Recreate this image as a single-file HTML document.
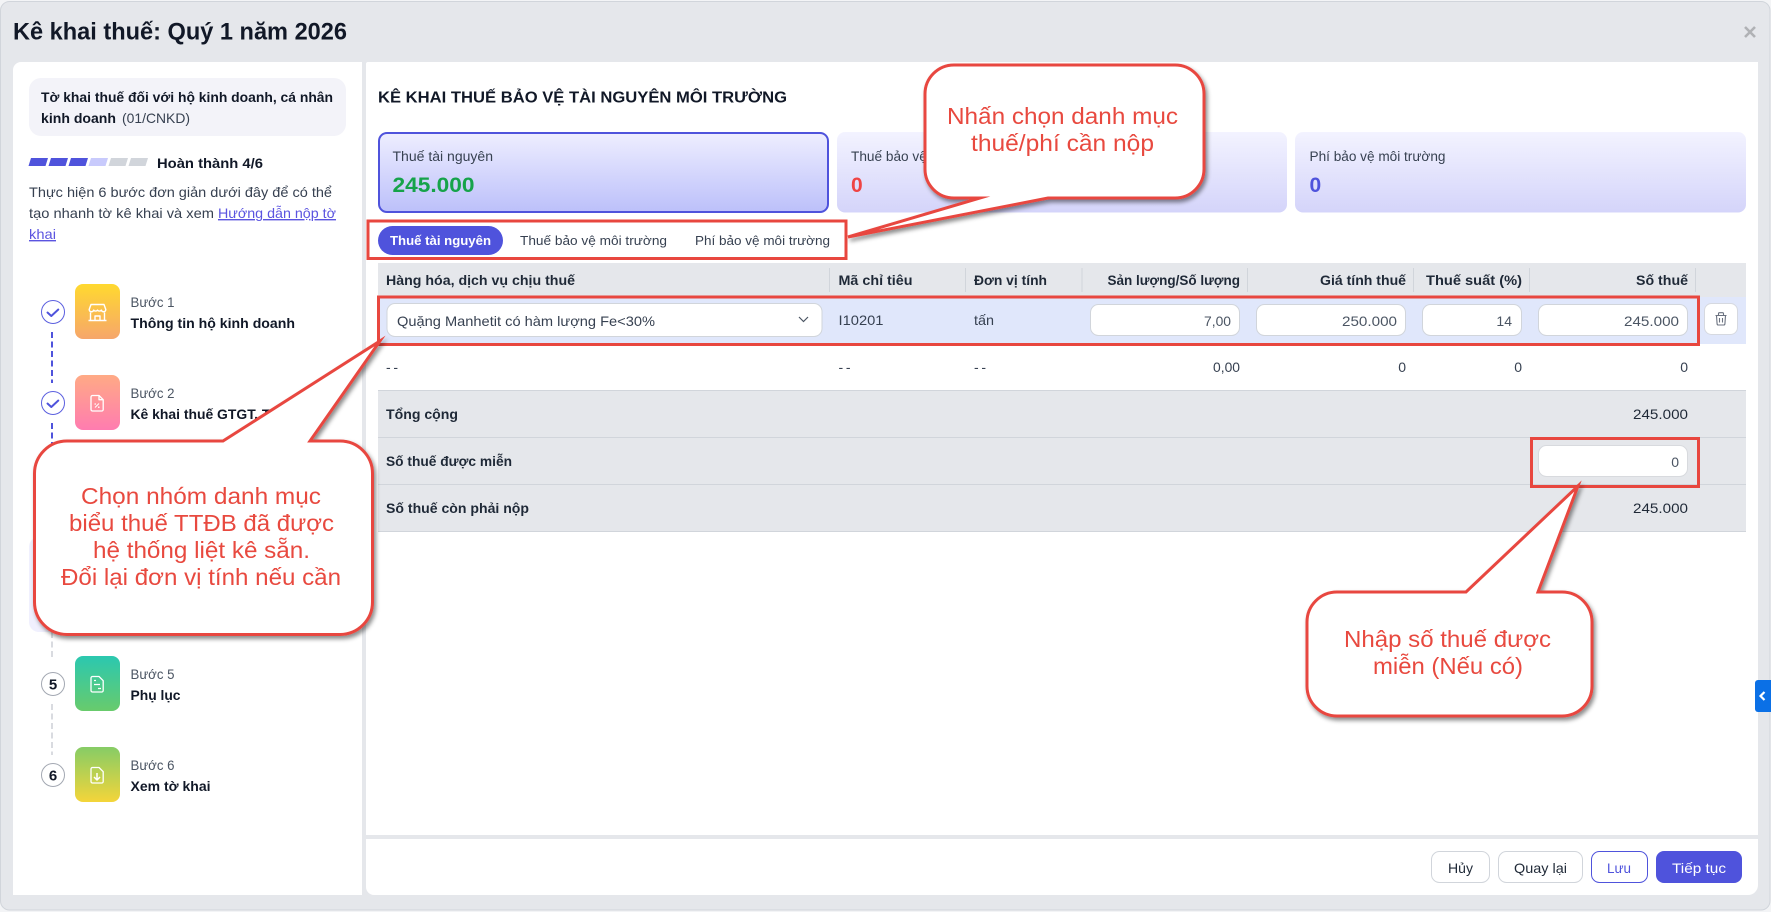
<!DOCTYPE html>
<html lang="vi">
<head>
<meta charset="utf-8">
<title>Kê khai thuế</title>
<style>
html,body{margin:0;padding:0;background:#f3f4f6;width:1771px;height:912px;overflow:hidden}
svg{display:block;position:absolute;left:0;top:0}
text{font-family:"Liberation Sans",Arial,sans-serif;fill:#1f2937;font-size:14px}
.b{font-weight:700;fill:#111827}
.h{font-weight:700;font-size:13.5px;fill:#1f2937}
.g{fill:#4b5563}
.n{fill:#374151}
.i{fill:#4b5563}
.c{font-size:23.5px;fill:#e8493f}
</style>
</head>
<body>
<svg width="1771" height="912" viewBox="0 0 1771 912" xmlns="http://www.w3.org/2000/svg">
<defs>
<linearGradient id="act" x1="0" y1="0" x2="0" y2="1"><stop offset="0" stop-color="#eeeeff"/><stop offset="1" stop-color="#bcc0fa"/></linearGradient>
<linearGradient id="ina" x1="0" y1="0" x2="0" y2="1"><stop offset="0" stop-color="#f3f3ff"/><stop offset="1" stop-color="#d4d4fa"/></linearGradient>
<linearGradient id="s1" x1="0" y1="0" x2="0" y2="1"><stop offset="0" stop-color="#ffd92f"/><stop offset="1" stop-color="#f6a66b"/></linearGradient>
<linearGradient id="s2" x1="0" y1="0" x2="0" y2="1"><stop offset="0" stop-color="#ffaa85"/><stop offset="1" stop-color="#ff7cb0"/></linearGradient>
<linearGradient id="s5" x1="0" y1="0" x2="0" y2="1"><stop offset="0" stop-color="#2bc8b0"/><stop offset="1" stop-color="#68cb6c"/></linearGradient>
<linearGradient id="s6" x1="0" y1="0" x2="0" y2="1"><stop offset="0" stop-color="#86cc66"/><stop offset="1" stop-color="#f4d53a"/></linearGradient>
<filter id="sh" x="-10%" y="-10%" width="125%" height="125%"><feDropShadow dx="2" dy="3" stdDeviation="2.2" flood-color="#000" flood-opacity=".45"/></filter>
</defs>

<!-- modal -->
<rect x=".5" y="1.5" width="1769.5" height="908.5" rx="9" fill="#e5e7eb" stroke="#d1d5db"/>
<text x="13" y="39.5" class="b" style="font-size:24.5px" textLength="334" lengthAdjust="spacingAndGlyphs">Kê khai thuế: Quý 1 năm 2026</text>
<path d="M1745 27l10 10M1755 27l-10 10" stroke="#b0b2b5" stroke-width="2.6" fill="none"/>

<!-- left panel -->
<path d="M13 70a8 8 0 0 1 8-8H362V895H13Z" fill="#fff"/>
<rect x="29" y="78" width="317" height="58" rx="12" fill="#f3f3f9"/>
<text x="41" y="102" class="b" textLength="292" lengthAdjust="spacingAndGlyphs">Tờ khai thuế đối với hộ kinh doanh, cá nhân</text>
<text x="41" y="123" class="b" textLength="75" lengthAdjust="spacingAndGlyphs">kinh doanh</text>
<text x="122" y="123" class="n" textLength="68" lengthAdjust="spacingAndGlyphs">(01/CNKD)</text>

<g>
<path d="M31 158h17l-2.500 8h-17Z" fill="#4f53dc"/>
<path d="M51 158h17l-2.500 8h-17Z" fill="#4f53dc"/>
<path d="M71 158h17l-2.500 8h-17Z" fill="#4f53dc"/>
<path d="M91 158h17l-2.500 8h-17Z" fill="#c8cafc"/>
<path d="M111 158h17l-2.500 8h-17Z" fill="#d1d5db"/>
<path d="M131 158h17l-2.500 8h-17Z" fill="#d1d5db"/>
</g>
<text x="157" y="168" class="b" textLength="106" lengthAdjust="spacingAndGlyphs">Hoàn thành 4/6</text>
<text x="29" y="197" class="n" textLength="303" lengthAdjust="spacingAndGlyphs">Thực hiện 6 bước đơn giản dưới đây để có thể</text>
<text x="29" y="218" class="n" textLength="185" lengthAdjust="spacingAndGlyphs">tạo nhanh tờ kê khai và xem</text>
<text x="218" y="218" style="fill:#5b54e0;text-decoration:underline" textLength="118" lengthAdjust="spacingAndGlyphs">Hướng dẫn nộp tờ</text>
<text x="29" y="239" style="fill:#5b54e0;text-decoration:underline" textLength="27" lengthAdjust="spacingAndGlyphs">khai</text>

<!-- active highlight step 4 -->
<rect x="29" y="537" width="317" height="95" rx="10" fill="#f0f0fe"/>

<!-- connectors -->
<path d="M52 332V383" stroke="#4f53dc" stroke-width="2" stroke-dasharray="6 3.500" fill="none"/>
<path d="M52 423V474" stroke="#4f53dc" stroke-width="2" stroke-dasharray="6 3.500" fill="none"/>
<path d="M52 632V660" stroke="#d9dbe0" stroke-width="2" stroke-dasharray="6 3.500" fill="none"/>
<path d="M52 704V755" stroke="#d9dbe0" stroke-width="2" stroke-dasharray="6 3.500" fill="none"/>

<!-- step 1 -->
<circle cx="53" cy="312" r="11.500" fill="#fff" stroke="#5b5fdf" stroke-width="1"/>
<path d="M47.500 312.500l3.800 3.500 7-6.500" fill="none" stroke="#4f53dc" stroke-width="2" stroke-linecap="round" stroke-linejoin="round"/>
<rect x="75" y="284" width="45" height="55" rx="8" fill="url(#s1)"/>
<g fill="none" stroke="#fff" stroke-width="1.400" stroke-linejoin="round">
<path d="M91 304.500h13l1.800 5a2.300 2.300 0 0 1-4.500.6 2.300 2.300 0 0 1-3.800 0 2.300 2.300 0 0 1-3.800 0 2.300 2.300 0 0 1-4.500-.6Z"/>
<path d="M90.500 312.500V320.500M104.500 312.500V320.500M88.500 320.500H106.500"/>
<path d="M95 320.500V316h5v4.500"/>
</g>
<text x="130.500" y="307" class="g" textLength="44" lengthAdjust="spacingAndGlyphs">Bước 1</text>
<text x="130.500" y="328" class="b" textLength="164.500" lengthAdjust="spacingAndGlyphs">Thông tin hộ kinh doanh</text>

<!-- step 2 -->
<circle cx="53" cy="403" r="11.500" fill="#fff" stroke="#5b5fdf" stroke-width="1"/>
<path d="M47.500 403.500l3.800 3.500 7-6.500" fill="none" stroke="#4f53dc" stroke-width="2" stroke-linecap="round" stroke-linejoin="round"/>
<rect x="75" y="375" width="45" height="55" rx="8" fill="url(#s2)"/>
<g fill="none" stroke="#fff" stroke-width="1.300" stroke-linejoin="round">
<path d="M92.500 395.500h6.500l4.200 4.200v9.800a1.500 1.500 0 0 1-1.500 1.500h-9.200a1.500 1.500 0 0 1-1.500-1.500v-12.500a1.500 1.500 0 0 1 1.500-1.500Z"/>
<path d="M99 395.500v4.200h4.200"/>
<path d="M95 407.500l4-4" stroke-width="1"/>
</g>
<circle cx="95.200" cy="404" r=".8" fill="#fff"/><circle cx="98.800" cy="407.200" r=".8" fill="#fff"/>
<text x="130.500" y="398" class="g" textLength="44" lengthAdjust="spacingAndGlyphs">Bước 2</text>
<text x="130.500" y="419" class="b" textLength="170" lengthAdjust="spacingAndGlyphs">Kê khai thuế GTGT, TNCN</text>

<!-- step 5 -->
<circle cx="53" cy="684" r="11.500" fill="#fff" stroke="#a3a8b2" stroke-width="1"/>
<text x="53" y="689.500" class="b" text-anchor="middle" style="font-size:15px">5</text>
<rect x="75" y="656" width="45" height="55" rx="8" fill="url(#s5)"/>
<g fill="none" stroke="#fff" stroke-width="1.300" stroke-linejoin="round">
<path d="M92.500 676.500h6.500l4.200 4.200v9.800a1.500 1.500 0 0 1-1.500 1.500h-9.200a1.500 1.500 0 0 1-1.500-1.500v-12.500a1.500 1.500 0 0 1 1.500-1.500Z"/>
<path d="M94 680.500h2M94 684.500h6M98 688.500h3"/>
</g>
<text x="130.500" y="679" class="g" textLength="44" lengthAdjust="spacingAndGlyphs">Bước 5</text>
<text x="130.500" y="700" class="b" textLength="50" lengthAdjust="spacingAndGlyphs">Phụ lục</text>

<!-- step 6 -->
<circle cx="53" cy="775" r="11.500" fill="#fff" stroke="#a3a8b2" stroke-width="1"/>
<text x="53" y="780.500" class="b" text-anchor="middle" style="font-size:15px">6</text>
<rect x="75" y="747" width="45" height="55" rx="8" fill="url(#s6)"/>
<g fill="none" stroke="#fff" stroke-width="1.300" stroke-linejoin="round">
<path d="M92.500 767.500h6.500l4.200 4.200v9.800a1.500 1.500 0 0 1-1.500 1.500h-9.200a1.500 1.500 0 0 1-1.500-1.500v-12.500a1.500 1.500 0 0 1 1.500-1.500Z"/>
<path d="M97 773v6.500M94 777l3 3 3-3" stroke-width="1.500"/>
</g>
<text x="130.500" y="770" class="g" textLength="44" lengthAdjust="spacingAndGlyphs">Bước 6</text>
<text x="130.500" y="791" class="b" textLength="80" lengthAdjust="spacingAndGlyphs">Xem tờ khai</text>

<!-- right panel -->
<path d="M366 64a2 2 0 0 1 2-2H1758V885a10 10 0 0 1-10 10H374a8 8 0 0 1-8-8Z" fill="#fff"/>
<rect x="366" y="835" width="1392" height="4" fill="#e5e7eb"/>

<text x="378" y="102.500" class="b" style="font-size:16px" textLength="409" lengthAdjust="spacingAndGlyphs">KÊ KHAI THUẾ BẢO VỆ TÀI NGUYÊN MÔI TRƯỜNG</text>

<!-- cards -->
<rect x="379" y="133" width="449" height="79" rx="8" fill="url(#act)" stroke="#4f53dc" stroke-width="2"/>
<text x="392.500" y="161" class="n" style="font-size:13.5px" textLength="100.500" lengthAdjust="spacingAndGlyphs">Thuế tài nguyên</text>
<text x="392.500" y="192" class="b" style="font-size:21px;fill:#16a34a" textLength="82" lengthAdjust="spacingAndGlyphs">245.000</text>

<rect x="837" y="132" width="450" height="80.500" rx="8" fill="url(#ina)"/>
<text x="851" y="161" class="n" style="font-size:13.500px" textLength="147" lengthAdjust="spacingAndGlyphs">Thuế bảo vệ môi trường</text>
<text x="851" y="192" class="b" style="font-size:21px;fill:#ef4444">0</text>

<rect x="1295" y="132" width="451" height="80.500" rx="8" fill="url(#ina)"/>
<text x="1309.500" y="161" class="n" style="font-size:13.500px" textLength="136" lengthAdjust="spacingAndGlyphs">Phí bảo vệ môi trường</text>
<text x="1309.500" y="192" class="b" style="font-size:21px;fill:#4f53dc">0</text>

<!-- tabs -->
<rect x="378" y="226" width="125" height="29" rx="14.500" fill="#4f53dc"/>
<text x="390" y="245" class="b" style="font-size:13px;fill:#fff" textLength="101" lengthAdjust="spacingAndGlyphs">Thuế tài nguyên</text>
<text x="520" y="245" class="n" style="font-size:13px" textLength="147" lengthAdjust="spacingAndGlyphs">Thuế bảo vệ môi trường</text>
<text x="695" y="245" class="n" style="font-size:13px" textLength="135" lengthAdjust="spacingAndGlyphs">Phí bảo vệ môi trường</text>

<!-- table header -->
<rect x="378" y="263" width="1368" height="34" fill="#e5e7eb"/>
<path d="M829.500 268v24M965.500 268v24M1082 268v24M1247.500 268v24M1413.500 268v24M1529.500 268v24M1695.500 268v24" stroke="#d1d5db" stroke-width="1"/>
<text x="386" y="285" class="h" textLength="189" lengthAdjust="spacingAndGlyphs">Hàng hóa, dịch vụ chịu thuế</text>
<text x="838.500" y="285" class="h" textLength="74" lengthAdjust="spacingAndGlyphs">Mã chỉ tiêu</text>
<text x="974" y="285" class="h" textLength="73" lengthAdjust="spacingAndGlyphs">Đơn vị tính</text>
<text x="1107.500" y="285" class="h" textLength="132.500" lengthAdjust="spacingAndGlyphs">Sản lượng/Số lượng</text>
<text x="1320" y="285" class="h" textLength="86" lengthAdjust="spacingAndGlyphs">Giá tính thuế</text>
<text x="1426" y="285" class="h" textLength="96" lengthAdjust="spacingAndGlyphs">Thuế suất (%)</text>
<text x="1636" y="285" class="h" textLength="52" lengthAdjust="spacingAndGlyphs">Số thuế</text>

<!-- row 1 -->
<rect x="378" y="297" width="1368" height="47" fill="#e0e7fb"/>
<rect x="387" y="303.500" width="435" height="33" rx="8" fill="#fff" stroke="#d1d5db"/>
<text x="397" y="326" class="n" textLength="258" lengthAdjust="spacingAndGlyphs">Quặng Manhetit có hàm lượng Fe&lt;30%</text>
<path d="M799 317l4.500 4.500 4.500-4.500" fill="none" stroke="#4b5563" stroke-width="1.200"/>
<text x="838.500" y="325" class="n" textLength="45" lengthAdjust="spacingAndGlyphs">I10201</text>
<text x="974" y="325" class="n" textLength="20" lengthAdjust="spacingAndGlyphs">tấn</text>

<rect x="1090.500" y="304.500" width="149" height="31" rx="8" fill="#fff" stroke="#d1d5db"/>
<text x="1204" y="326" class="i" textLength="27" lengthAdjust="spacingAndGlyphs">7,00</text>
<rect x="1256.500" y="304.500" width="149" height="31" rx="8" fill="#fff" stroke="#d1d5db"/>
<text x="1342" y="326" class="i" textLength="55" lengthAdjust="spacingAndGlyphs">250.000</text>
<rect x="1422.500" y="304.500" width="99" height="31" rx="8" fill="#fff" stroke="#d1d5db"/>
<text x="1512" y="326" class="i" text-anchor="end">14</text>
<rect x="1538.500" y="304.500" width="149" height="31" rx="8" fill="#fff" stroke="#d1d5db"/>
<text x="1624" y="326" class="i" textLength="55" lengthAdjust="spacingAndGlyphs">245.000</text>

<rect x="1704.500" y="303.500" width="33" height="31" rx="7" fill="#fff" stroke="#d6d9e0"/>
<g fill="none" stroke="#6b7280" stroke-width="1.100">
<path d="M1715.500 315.500h11M1718.500 315.500v-1.800a1 1 0 0 1 1-1h3a1 1 0 0 1 1 1v1.800"/>
<path d="M1716.500 315.500l.6 8.500a1.200 1.200 0 0 0 1.200 1h5.400a1.200 1.200 0 0 0 1.200-1l.6-8.500M1719.500 318v4.500M1722.500 318v4.500"/>
</g>

<!-- row 2 -->
<rect x="378" y="344" width="1368" height="46" fill="#fff"/>
<text x="386" y="372" class="n" textLength="12" lengthAdjust="spacing">--</text>
<text x="838.500" y="372" class="n" textLength="12" lengthAdjust="spacing">--</text>
<text x="974" y="372" class="n" textLength="12" lengthAdjust="spacing">--</text>
<text x="1240" y="372" class="n" text-anchor="end" textLength="27" lengthAdjust="spacingAndGlyphs">0,00</text>
<text x="1406" y="372" class="n" text-anchor="end">0</text>
<text x="1522" y="372" class="n" text-anchor="end">0</text>
<text x="1688" y="372" class="n" text-anchor="end">0</text>

<!-- summary -->
<rect x="378" y="390" width="1368" height="141" fill="#e5e7eb"/>
<path d="M378 390.500H1746M378 437.500H1746M378 484.500H1746M378 531.500H1746" stroke="#d1d5db" stroke-width="1"/>
<text x="386" y="419" class="h" textLength="72" lengthAdjust="spacingAndGlyphs">Tổng cộng</text>
<text x="386" y="466" class="h" textLength="126" lengthAdjust="spacingAndGlyphs">Số thuế được miễn</text>
<text x="386" y="513" class="h" textLength="143" lengthAdjust="spacingAndGlyphs">Số thuế còn phải nộp</text>
<text x="1633" y="419" class="n" style="fill:#1f2937" textLength="55" lengthAdjust="spacingAndGlyphs">245.000</text>
<rect x="1538.500" y="445.500" width="149" height="31" rx="8" fill="#fff" stroke="#d8dade"/>
<text x="1679" y="467" class="i" text-anchor="end">0</text>
<text x="1633" y="513" class="n" style="fill:#1f2937" textLength="55" lengthAdjust="spacingAndGlyphs">245.000</text>

<!-- footer -->
<rect x="1431.500" y="851.500" width="58" height="31" rx="8" fill="#fff" stroke="#d1d5db"/>
<text x="1448" y="873" class="n" style="fill:#1f2937" textLength="25" lengthAdjust="spacingAndGlyphs">Hủy</text>
<rect x="1498.500" y="851.500" width="84" height="31" rx="8" fill="#fff" stroke="#d1d5db"/>
<text x="1514" y="873" class="n" style="fill:#1f2937" textLength="53" lengthAdjust="spacingAndGlyphs">Quay lại</text>
<rect x="1591.500" y="851.500" width="56" height="31" rx="8" fill="#fff" stroke="#4f53dc"/>
<text x="1607" y="873" style="fill:#4f53dc" textLength="24" lengthAdjust="spacingAndGlyphs">Lưu</text>
<rect x="1656" y="851" width="86" height="32" rx="8" fill="#4f53dc"/>
<text x="1672" y="873" style="fill:#fff" textLength="54" lengthAdjust="spacingAndGlyphs">Tiếp tục</text>

<!-- side tab -->
<path d="M1771 680h-13a3 3 0 0 0-3 3v26a3 3 0 0 0 3 3h13Z" fill="#0b70e6"/>
<path d="M1764.500 692l-4 4 4 4" fill="none" stroke="#fff" stroke-width="2.200"/>

<!-- annotation boxes -->
<g fill="none" stroke="#e8473f" stroke-width="3">
<rect x="368" y="221" width="478" height="37.500"/>
<rect x="378.500" y="297" width="1320" height="47.500"/>
<rect x="1531.500" y="438.500" width="167" height="48"/>
</g>

<!-- callouts -->
<g fill="#fff" stroke="#e8473f" stroke-width="3" stroke-miterlimit="12" stroke-linejoin="miter" filter="url(#sh)">
<path d="M67 441H223L380 341 310 441H340a32.500 32.500 0 0 1 32.500 32.500V602a32.500 32.500 0 0 1-32.500 32.500H67a32.500 32.500 0 0 1-32.500-32.500V473.500A32.500 32.500 0 0 1 67 441Z"/>
<path d="M954 65H1175a29 29 0 0 1 29 29V169a29 29 0 0 1-29 29H1048L848 237 980 198H954a29 29 0 0 1-29-29V94a29 29 0 0 1 29-29Z"/>
<path d="M1337 592H1466L1578 486 1538 592H1562a30 30 0 0 1 30 30V686a30 30 0 0 1-30 30H1337a30 30 0 0 1-30-30V622a30 30 0 0 1 30-30Z"/>
</g>

<text x="81" y="504" class="c" textLength="240" lengthAdjust="spacingAndGlyphs">Chọn nhóm danh mục</text>
<text x="69" y="531" class="c" textLength="265" lengthAdjust="spacingAndGlyphs">biểu thuế TTĐB đã được</text>
<text x="93" y="558" class="c" textLength="217" lengthAdjust="spacingAndGlyphs">hệ thống liệt kê sẵn.</text>
<text x="61" y="585" class="c" textLength="280" lengthAdjust="spacingAndGlyphs">Đổi lại đơn vị tính nếu cần</text>

<text x="947" y="124" class="c" textLength="231" lengthAdjust="spacingAndGlyphs">Nhấn chọn danh mục</text>
<text x="971" y="151" class="c" textLength="183" lengthAdjust="spacingAndGlyphs">thuế/phí cần nộp</text>

<text x="1344" y="647" class="c" textLength="207" lengthAdjust="spacingAndGlyphs">Nhập số thuế được</text>
<text x="1373" y="674" class="c" textLength="150" lengthAdjust="spacingAndGlyphs">miễn (Nếu có)</text>
</svg>
</body>
</html>
